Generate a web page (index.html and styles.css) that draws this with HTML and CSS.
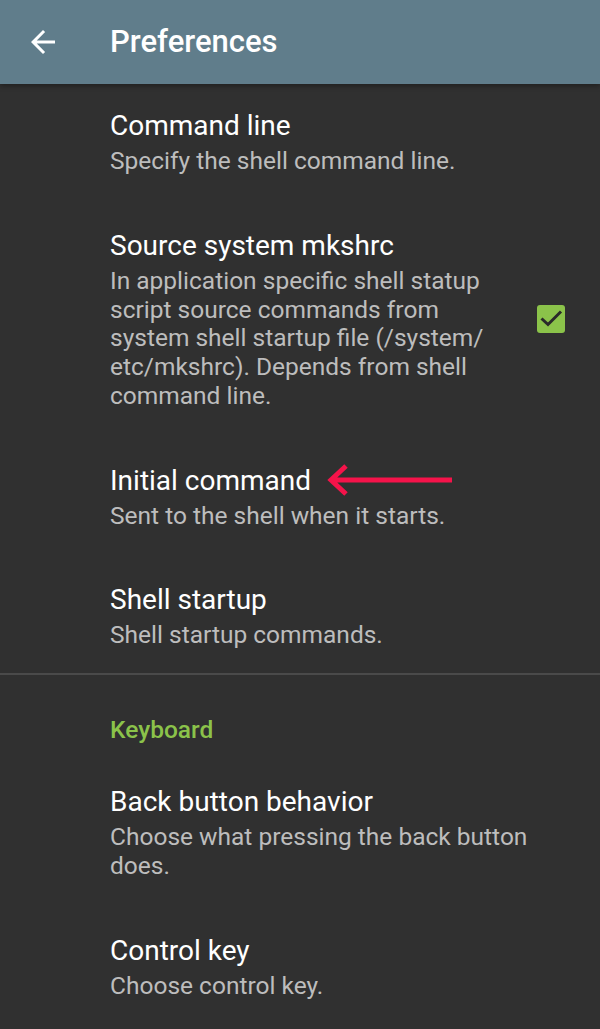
FILE: index.html
```html
<!DOCTYPE html>
<html>
<head>
<meta charset="utf-8">
<link rel="stylesheet" href="styles.css">
</head>
<body>
<div class="app">
  <header class="toolbar">
    <svg class="back" viewBox="0 0 24 24" width="36" height="36"><path fill="#fff" d="M20 11H7.83l5.59-5.59L12 4l-8 8 8 8 1.41-1.41L7.83 13H20v-2z"/></svg>
    <h1 class="toolbar-title">Preferences</h1>
  </header>
  <main class="list">
    <div class="pref">
      <div class="pref-text">
        <div class="pref-title">Command line</div>
        <div class="pref-summary">Specify the shell command line.</div>
      </div>
    </div>
    <div class="pref">
      <div class="pref-text">
        <div class="pref-title">Source system mkshrc</div>
        <div class="pref-summary">In application specific shell statup<br>script source commands from<br>system shell startup file (/system/<br>etc/mkshrc). Depends from shell<br>command line.</div>
      </div>
      <div class="checkbox">
        <svg viewBox="0 0 28 28" width="28" height="28"><path fill="none" stroke="#2a2a2a" stroke-width="3" d="M4.5 13.5L11 19.5L24 6.5"/></svg>
      </div>
    </div>
    <div class="pref pref-marked">
      <div class="pref-text">
        <div class="pref-title">Initial command</div>
        <div class="pref-summary">Sent to the shell when it starts.</div>
      </div>
      <svg class="pointer" viewBox="0 0 130 36" width="130" height="36"><path fill="none" stroke="#f5134a" stroke-width="5" stroke-linejoin="miter" d="M21 4L6 18L21 32M6 18H127"/></svg>
    </div>
    <div class="pref">
      <div class="pref-text">
        <div class="pref-title">Shell startup</div>
        <div class="pref-summary">Shell startup commands.</div>
      </div>
    </div>
    <div class="divider"></div>
    <div class="category">Keyboard</div>
    <div class="pref">
      <div class="pref-text">
        <div class="pref-title">Back button behavior</div>
        <div class="pref-summary">Choose what pressing the back button does.</div>
      </div>
    </div>
    <div class="pref">
      <div class="pref-text">
        <div class="pref-title">Control key</div>
        <div class="pref-summary">Choose control key.</div>
      </div>
    </div>
  </main>
</div>
</body>
</html>
```
FILE: styles.css
```css
html, body {
  margin: 0;
  padding: 0;
  background: #303030;
}
body {
  font-family: Roboto, "Noto Sans", sans-serif;
  width: 600px;
  height: 1029px;
  overflow: hidden;
}
.toolbar {
  height: 84px;
  background: #607d8b;
  display: flex;
  align-items: center;
  box-shadow: 0 2px 5px rgba(0,0,0,0.35);
  position: relative;
  z-index: 1;
}
.back {
  margin-left: 25px;
  margin-right: 49px;
  flex: none;
}
.toolbar-title {
  margin: 0;
  color: #fff;
  font-size: 31px;
  font-weight: 500;
  line-height: 36px;
}
.list {
  display: flex;
  flex-direction: column;
}
.pref {
  display: flex;
  align-items: center;
  padding: 24px 35px 28px 110px;
}
.pref-marked {
  position: relative;
}
.pointer {
  position: absolute;
  left: 325px;
  top: 23px;
}
.pref-text {
  flex: 1;
  min-width: 0;
}
.pref-title {
  color: #fff;
  font-size: 28px;
  line-height: 36px;
}
.pref-summary {
  color: #bdbdbd;
  font-size: 24.5px;
  line-height: 28.75px;
  margin-top: 3px;
}
.checkbox {
  flex: none;
  width: 28px;
  height: 28px;
  border-radius: 3px;
  background: #8bc34a;
  margin-left: 20px;
}
.checkbox svg {
  display: block;
}
.divider {
  height: 2px;
  background: #4a4a4a;
  margin-top: -5px;
}
.category {
  color: #8bc34a;
  font-size: 24.5px;
  font-weight: 500;
  line-height: 29px;
  padding: 40px 24px 16px 110px;
}
```
